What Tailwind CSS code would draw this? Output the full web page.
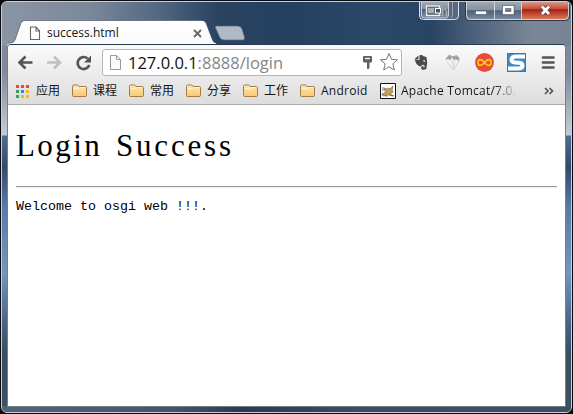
<!DOCTYPE html>
<html lang="zh-CN">
<head>
<meta charset="utf-8">
<title>success.html</title>
<script src="https://cdn.jsdelivr.net/npm/@tailwindcss/browser@4"></script>
</head>
<body class="w-[573px] h-[414px] overflow-hidden bg-[#090b11] font-['Open_Sans','Noto_Sans_CJK_SC',sans-serif] text-[#111]">
<svg class="absolute w-0 h-0">
  <defs>
    <linearGradient id="fold" x1="0" y1="0" x2="0" y2="1"><stop offset="0" stop-color="#ffe9b5"/><stop offset="1" stop-color="#f8c873"/></linearGradient>
    <symbol id="folder" viewBox="0 0 16 14"><path d="M.5 11.500V2.300Q.5 1 1.800 1h3.700Q6.500 1 7 2.500h6.500Q14.500 2.500 14.500 3.800v7.700q0 1-1.200 1H1.700q-1.200 0-1.200-1z" fill="url(#fold)" stroke="#a67c45"/><path d="M1.500 4.500H7L8 3.500h5.500" fill="none" stroke="#fff3cf"/></symbol>
  </defs>
</svg>
<main class="relative w-[571px] h-[412px] mx-px mt-px rounded-[6px] border border-[#c9d0d9] overflow-hidden bg-[linear-gradient(180deg,#7f8b9b_0px,#7f8b9b_70px,#c5ccd5_133px,#4d6d92_134px,#34496a_165px,#567ba7_205px,#7796bd_270px,#496588_320px,#3b4f61_350px,#3e5061_412px)] flex flex-col px-[5px]">
  <div class="absolute left-0 top-0 w-full h-[44px] bg-[linear-gradient(90deg,#8a95a4_0px,#7c899b_85px,#536883_155px,#294361_215px,#25415f_290px,#2a4868_370px,#294564_430px,#53667f_480px,#7b8796_530px,#778392_571px)]"></div>
  <div class="absolute left-0 bottom-0 w-full h-[6px] bg-[linear-gradient(90deg,#506578,#42566a_30%,#2b3b4b_42%,#3c4f60_65%,#3d5062)]"></div>

  <header class="relative h-[43px] shrink-0">
    <svg class="absolute left-0 top-[18px] w-[245px] h-[26px]" viewBox="0 0 245 26">
      <defs><linearGradient id="tab" x1="0" y1="0" x2="0" y2="1"><stop offset="0" stop-color="#fff"/><stop offset="1" stop-color="#f9f9f9"/></linearGradient></defs>
      <path d="M0 26v-1.500q0-1.500 3-1.500 4 0 5-3L14 3q1-2.500 4-2.500h177q3 0 4 2.500l6.500 17q1 3 4 3v3z" fill="url(#tab)" stroke="#2f4056" stroke-opacity=".55"/>
      <path d="M209 6h21.500q3.500 0 4.500 3l2.500 8q.8 3-2 3h-18q-4 0-5-3l-3.500-8q-1.500-3 0-3z" fill="#b0bac7" stroke="#53647b" stroke-width=".7"/>
    </svg>
    <div class="absolute left-[22px] top-[22px] h-[18px] w-[176px] flex items-center">
      <svg class="w-[12px] h-[15px]" viewBox="0 0 12 15"><path d="M1.500 1h5.500l3.500 3.800V13.500h-9zM7 1v4h3.500" fill="#fff" stroke="#666" stroke-width="1.100"/></svg>
      <span class="ml-[6px] text-[12px] leading-[16px] text-[#151515]">success.html</span>
      <svg class="ml-auto mr-[3px] w-[9px] h-[9px]" viewBox="0 0 9 9"><path d="M1 1l7 7M8 1L1 8" stroke="#666" stroke-width="1.800"/></svg>
    </div>
    <svg class="absolute left-[409px] top-[-1px] w-[154px] h-[21px]" viewBox="416 1 154 21">
      <defs>
        <linearGradient id="ctl" x1="0" y1="0" x2="0" y2="1"><stop offset="0" stop-color="#a1abb8"/><stop offset=".45" stop-color="#8793a3"/><stop offset=".5" stop-color="#4d6078"/><stop offset="1" stop-color="#8292a6"/></linearGradient>
        <linearGradient id="cls" x1="0" y1="0" x2="0" y2="1"><stop offset="0" stop-color="#d9a399"/><stop offset=".42" stop-color="#c6513d"/><stop offset=".48" stop-color="#a82211"/><stop offset="1" stop-color="#da7a5a"/></linearGradient>
      </defs>
      <path d="M419.500 1v15q0 3.500 4 3.500h31q4 0 4-3.500V1z" fill="#59697f" stroke="#dce0e6"/>
      <path d="M421.500 1v14q0 3 3 3h21q3 0 3-3V1z" fill="url(#ctl)" stroke="#cbd1d9"/>
      <path d="M452.500 1v14q0 2-2 2.500" fill="none" stroke="#9aa6b5"/>
      <text x="433" y="16" font-size="12" fill="#b2b8c0" font-family="Liberation Sans">En</text>
      <rect x="426.500" y="6" width="13" height="9.500" fill="#626d7c" stroke="#eee" stroke-width="1.300"/><rect x="428" y="8" width="6" height="5" fill="#a9afb7"/><rect x="435.500" y="8.500" width="5" height="4.500" fill="#4a5361" stroke="#fff"/>
      <path d="M465.500 1v15q0 4.500 4 4.500h95q5 0 5-4.500V1z" fill="url(#ctl)" stroke="#29394d"/>
      <path d="M521.500 1h47v14q0 4-4 4h-43z" fill="url(#cls)"/>
      <path d="M466.500 1v14.500q0 4 4 4h94q4 0 4-4V1M494.500 1v18M521.500 1v18" fill="none" stroke="#d7dce2" stroke-opacity=".9"/>
      <rect x="475.500" y="11" width="11" height="3.500" fill="#fff" stroke="#56606d" stroke-width=".7"/>
      <rect x="504" y="7" width="8.500" height="6" fill="none" stroke="#505965" stroke-width="4"/><rect x="504" y="7" width="8.500" height="6" fill="none" stroke="#fff" stroke-width="2.500"/>
      <path d="M542 6.500l7 7.500M549 6.500l-7 7.500" stroke="#5b3e46" stroke-width="4.500"/><path d="M542 6.500l7 7.500M549 6.500l-7 7.500" stroke="#fff" stroke-width="2.800"/>
    </svg>
  </header>

  <section class="relative w-[559px] h-[362px] shrink-0 border border-[#747d88] border-t-0 bg-white rounded-t-[3px]">
    <nav class="h-[60px] border-b border-[#a9a9a9] rounded-t-[3px] bg-linear-to-b from-[#fafafa] to-[#dddddd] shadow-[0_-1px_0_#25384f]">
      <div class="flex h-[34px] items-center">
        <svg class="w-[94px] h-[34px] shrink-0" viewBox="8 45 94 34" fill="none">
          <path d="M32.500 62.500H19.500M25.500 56.500l-6 6 6 6" stroke="#555" stroke-width="2.600"/>
          <path d="M47 62.500h13M54 56.500l6 6-6 6" stroke="#c0c0c0" stroke-width="2.600"/>
          <path d="M87.600 58.500A6 6 0 1 0 89.300 65" stroke="#555" stroke-width="2.700"/><path d="M91 55.500v7h-7z" fill="#555"/>
        </svg>
        <div class="flex items-center h-[27px] w-[300px] shrink-0 border border-[#b6b6b6] rounded-[3px] bg-white">
          <svg class="ml-[6px] w-[13px] h-[17px]" viewBox="0 0 13 17"><path d="M1.500 1.500h6l4 4v10h-10zM7.500 1.500v4h4" fill="#fafafa" stroke="#999"/></svg>
          <span class="ml-[6px] text-[16.5px] leading-[22px] relative top-px text-[#111] whitespace-nowrap">127.0.0.1<span class="text-[#858585]">:8888/login</span></span>
          <svg class="ml-auto w-[12px] h-[15px]" viewBox="0 0 12 15"><path d="M2 1h7q1 0 1 1v4.500q0 1-1 1H7.500V13l-1 1H5V7.500H2q-1 0-1-1V2q0-1 1-1z" fill="#606060"/><path d="M3 3.500h5" stroke="#eee" stroke-width="1.300"/></svg>
          <svg class="ml-[5px] mr-[2px] w-[20px] h-[20px]" viewBox="0 0 20 20"><path d="M10 1.500l2.500 5.800 6 .5-4.600 4 1.400 6.200-5.300-3.300L4.700 18l1.400-6.200-4.600-4 6-.5z" fill="#fff" stroke="#777" stroke-linejoin="round"/></svg>
        </div>
        <svg class="w-[162px] h-[34px] shrink-0" viewBox="402 45 162 34" fill="none">
          <path d="M414 59.500l4.500-4v4zM419.500 55.200q3-.7 4 1l3 .8q1.500 6-.2 12-2.500 1.500-4.800.2-1.200-3 1.700-3.500l.3 1.800 1.200-.2q.2-3-2.500-2.500l-1.200 1.700q-4.500-.5-6.200-6.500h4.700z" fill="#4b4b4b"/><circle cx="424.200" cy="61" r=".9" fill="#ddd"/>
          <path d="M445.500 58.500l4-4 3 2 4-1.500 3 2.800-.5 4-2.500-3-2 2-2-3-3 3-1-2.500-2 2z" fill="#aaa"/><path d="M447 62l6.500 8 5-8M452.500 60l1.500 8" stroke="#ccc"/><path d="M449 56v3M454 56v3M457 57v3" stroke="#8c8c8c"/>
          <circle cx="484.500" cy="62.500" r="9.400" fill="#e54b3e"/><path d="M484.500 62.500c-3-4.200-6.500-3.700-6.500 0s3.500 4.200 6.500 0 6.500-3.700 6.500 0-3.500 4.200-6.500 0z" stroke="#fc0" stroke-width="1.700"/>
          <rect x="507.500" y="53.500" width="18" height="18" fill="#4189c3" stroke="#3b78aa"/><path d="M525 56.500h-8.500q-5 0-5 3.200 0 2.300 3.500 2.700l4 .4q3.500.3 3.500 2.800 0 3-4.500 3H508" stroke="#fff" stroke-width="4"/>
          <path d="M543 57.500h10.500M543 62.500h10.500M543 67.500h10.500" stroke="#555" stroke-width="2.700" stroke-linecap="round"/>
        </svg>
      </div>
      <div class="flex items-center h-[24px] text-[12px] leading-[18px] whitespace-nowrap text-[#151515]">
        <svg class="ml-[8px] mr-[7px] w-[13px] h-[13px] shrink-0" viewBox="0 0 13 13"><path d="M0 0h3v3H0zM5 0h3v3H5zM10 0h3v3h-3z" fill="#ec4637"/><path d="M0 5h3v3H0zM0 10h3v3H0z" fill="#35a05b"/><path d="M5 5h3v3H5z" fill="#3e82e8"/><path d="M10 5h3v3h-3zM5 10h3v3H5zM10 10h3v3h-3z" fill="#f6b913"/></svg>
        <span class="w-[36px] shrink-0">应用</span>
        <svg class="w-[16px] h-[14px] mr-[5px] shrink-0"><use href="#folder"/></svg><span class="w-[36px] shrink-0">课程</span>
        <svg class="w-[16px] h-[14px] mr-[5px] shrink-0"><use href="#folder"/></svg><span class="w-[36px] shrink-0">常用</span>
        <svg class="w-[16px] h-[14px] mr-[5px] shrink-0"><use href="#folder"/></svg><span class="w-[36px] shrink-0">分享</span>
        <svg class="w-[16px] h-[14px] mr-[5px] shrink-0"><use href="#folder"/></svg><span class="w-[36px] shrink-0">工作</span>
        <svg class="w-[16px] h-[14px] mr-[5px] shrink-0"><use href="#folder"/></svg><span class="w-[59px] shrink-0 tracking-[.25px]">Android</span>
        <svg class="w-[16px] h-[16px] mr-[5px] shrink-0" viewBox="0 0 16 16"><path d="M.500.500h15v15H.500z" fill="#fff" stroke="#111"/><path d="M2 11l4-2-2-4 3 1 2-1 1 1 3-3-1 4 1 2-3 2 3 2-5-1-4 1-2-1z" fill="#c6a052" stroke="#6d5d3b" stroke-width=".6"/><path d="M2 5h2M2 7h3M11 12l3 1M6 12l1 2" stroke="#444" stroke-width=".7"/></svg>
        <span class="w-[117px] shrink-0 overflow-hidden bg-linear-to-r from-[#151515] from-80% to-transparent bg-clip-text text-transparent tracking-[.25px]">Apache Tomcat/7.0.</span>
        <svg class="ml-[26px] w-[10px] h-[8px] shrink-0" viewBox="0 0 10 8"><path d="M1 1l3 3-3 3M5.500 1l3 3-3 3" fill="none" stroke="#555" stroke-width="1.700"/></svg>
      </div>
    </nav>
    <article class="px-[8px] pt-[22px] font-['Liberation_Serif',serif] text-black">
      <h1 class="flex h-[38px] items-center text-[31px] leading-[38px] font-normal"><span class="w-[100px] tracking-[2.4px]">Login</span> <span class="tracking-[2.8px]">Success</span></h1>
      <hr class="mt-[21px] h-[2px] border-0 border-t border-[#999] bg-[#eeeeee]">
      <p class="mt-[9px] text-[13.333px] leading-[19px] font-['Liberation_Mono',monospace]">Welcome to osgi web !!!.</p>
    </article>
  </section>
</main>
</body>
</html>
